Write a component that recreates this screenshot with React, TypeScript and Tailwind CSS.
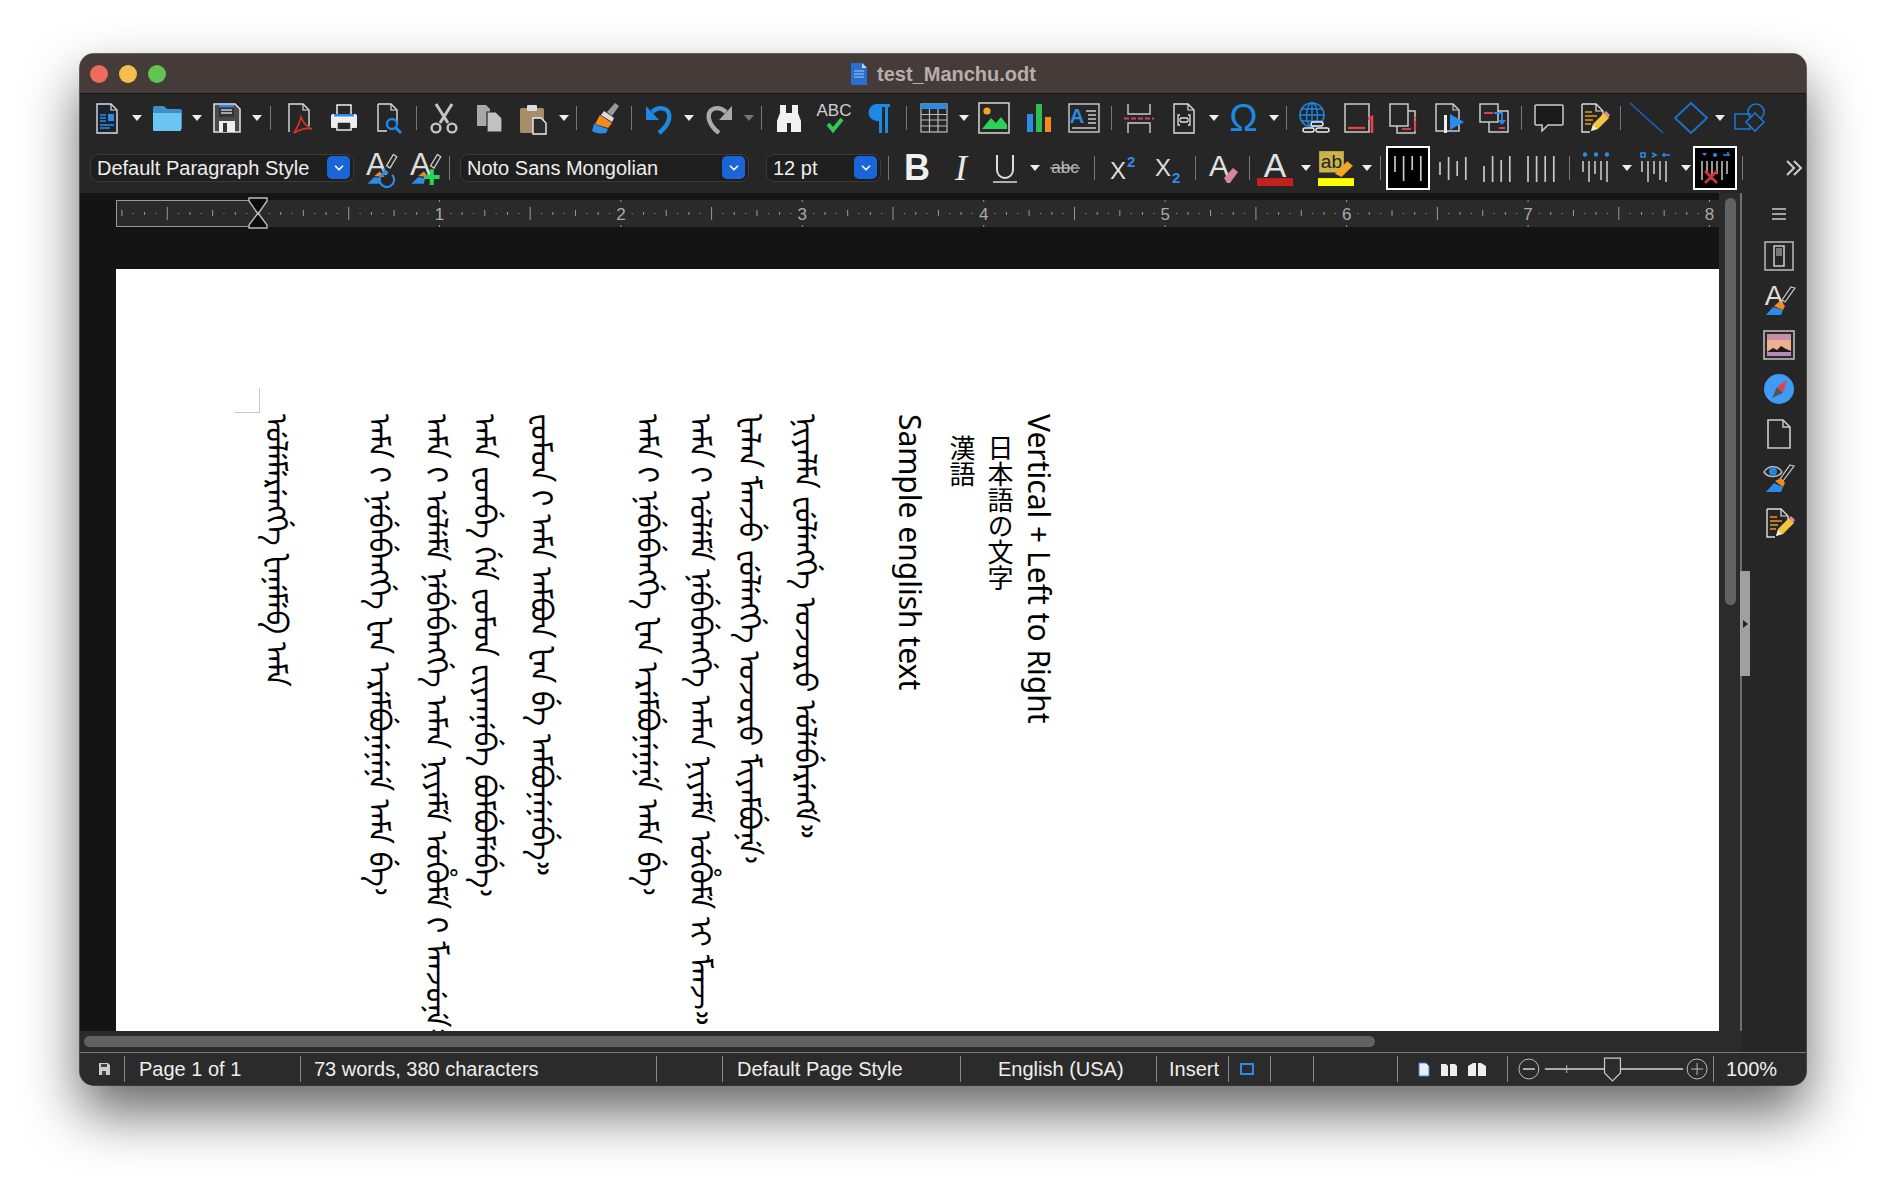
import type { ReactNode } from "react";
import { ChevronDown } from "lucide-react";

const sans = { fontFamily: '"Liberation Sans", sans-serif' };

function Ico({ children, size = 32 }: { children: ReactNode; size?: number }) {
  return (
    <svg width={size} height={size} viewBox="0 0 32 32" fill="none" className="overflow-visible">
      {children}
    </svg>
  );
}

const Page = ({ fill = "none", stroke = "#ddd" }: { fill?: string; stroke?: string }) => (
  <>
    <path d="M6 2h14l6 6v23H6z" fill={fill} stroke={stroke} strokeWidth="1.4" />
    <path d="M20 2v6h6" stroke={stroke} strokeWidth="1.2" />
  </>
);

const NewDoc = () => (
  <Ico>
    <Page fill="#1a2431" />
    <path d="M9 13h6M9 16h6M9 19h6M9 23h14M9 26h10" stroke="#2b8be6" strokeWidth="1.5" />
    <rect x="17" y="12" width="6" height="7" fill="#2b8be6" />
  </Ico>
);
const Folder = () => (
  <Ico>
    <path d="M2 6a2 2 0 0 1 2-2h9l3 3h13a2 2 0 0 1 2 2v18H2z" fill="#3f8fc9" />
    <path d="M2 11h28v17a1 1 0 0 1-1 1H3a1 1 0 0 1-1-1z" fill="#6cc4f2" />
  </Ico>
);
const Save = () => (
  <Ico>
    <path d="M3 2h21l5 5v23H3z" fill="#4a4a4a" stroke="#ddd" strokeWidth="1.6" />
    <rect x="8" y="3" width="15" height="12" fill="#333" />
    <rect x="8" y="3" width="15" height="2.4" fill="#2b8be6" />
    <path d="M10 8h11M10 11h11" stroke="#ccc" strokeWidth="1.4" />
    <rect x="8" y="19" width="16" height="11" fill="#eee" />
    <rect x="12" y="21" width="4" height="9" fill="#333" />
  </Ico>
);
const Pdf = () => (
  <Ico>
    <path d="M6 30V2h14l6 6v16" stroke="#ddd" strokeWidth="1.4" />
    <path d="M20 2v6h6" stroke="#ddd" strokeWidth="1.2" />
    <path d="M18 15c-1 5-4 11-7 16 5-3 12-6 18-4-4-1-9-6-11-12z" stroke="#d8322a" strokeWidth="1.6" />
  </Ico>
);
const Printer = () => (
  <Ico>
    <rect x="9" y="3" width="14" height="11" fill="#262626" stroke="#eee" strokeWidth="1.5" />
    <path d="M3 14a2 2 0 0 1 2-2h22a2 2 0 0 1 2 2v11a1 1 0 0 1-1 1H4a1 1 0 0 1-1-1z" fill="#eee" />
    <rect x="6" y="12" width="20" height="2.5" fill="#2b8be6" />
    <rect x="9" y="20" width="14" height="8" fill="#262626" stroke="#eee" strokeWidth="1.5" />
  </Ico>
);
const Preview = () => (
  <Ico>
    <path d="M5 2h13l6 6v14M14 29H5V2" stroke="#ddd" strokeWidth="1.4" />
    <path d="M18 2v6h6" stroke="#ddd" strokeWidth="1.2" />
    <circle cx="19" cy="22" r="5" stroke="#1e88e5" strokeWidth="2.4" />
    <path d="M23 26l5 5" stroke="#1e88e5" strokeWidth="3" />
  </Ico>
);
const Cut = () => (
  <Ico>
    <path d="M8 2l12 19M24 2L12 21" stroke="#c4c4c4" strokeWidth="3" />
    <circle cx="8" cy="26" r="4.4" stroke="#c4c4c4" strokeWidth="2.4" />
    <circle cx="24" cy="26" r="4.4" stroke="#c4c4c4" strokeWidth="2.4" />
  </Ico>
);
const Copy = () => (
  <Ico>
    <path d="M4 3h9l4 4v17H4z" fill="#a8a8a8" />
    <path d="M14 10h9l6 6v14H14z" fill="#c2c2c2" stroke="#262626" strokeWidth="1.2" />
  </Ico>
);
const Paste = () => (
  <Ico>
    <rect x="2" y="6" width="24" height="25" rx="1.5" fill="#a88d6b" />
    <rect x="9" y="3" width="10" height="6" rx="1" fill="#ddd" />
    <path d="M15 16h8l5 5v11H15z" fill="#2b2b2b" stroke="#eee" strokeWidth="1.4" />
  </Ico>
);
const Brush = () => (
  <Ico>
    <path d="M27 1l4 3-7 10-5-4z" fill="#9a9a9a" />
    <path d="M16 9l10 7-2 4-11-7z" fill="#ddd" />
    <path d="M12 13l12 8-4 5-13-4z" fill="#f58a1f" />
    <path d="M6 22l14 5-2 4c-6 1-12 0-14-2z" fill="#2b8be6" />
  </Ico>
);
const Undo = () => (
  <Ico>
    <path d="M3 4v14h13z" fill="#1e88e5" />
    <path d="M9 10c8-7 19-4 17 7-1 5-5 10-10 14" stroke="#1e88e5" strokeWidth="4.4" />
  </Ico>
);
const Redo = () => (
  <svg width="32" height="32" viewBox="0 0 32 32" fill="none" className="-scale-x-100">
    <path d="M3 4v14h13z" fill="#aaa" />
    <path d="M9 10c8-7 19-4 17 7-1 5-5 10-10 14" stroke="#aaa" strokeWidth="4.4" />
  </svg>
);
const Binoculars = () => (
  <Ico>
    <path d="M7 3h6v8h6V3h6v8l3 8v11H18v-9h-4v9H4V19l3-8z" fill="#f2f2f2" />
  </Ico>
);
const Spell = () => (
  <Ico>
    <text x="16" y="14" textAnchor="middle" fontSize="17" fill="#d0d0d0" style={sans}>
      ABC
    </text>
    <path d="M10 22l5 6 9-11" stroke="#2ecc50" strokeWidth="4" />
  </Ico>
);
const Para = () => (
  <Ico>
    <path d="M27 2H14a8 8 0 0 0 0 17h2v12h3V5h3v26h3V5h2z" fill="#1e88e5" />
  </Ico>
);
const Table = () => (
  <Ico>
    <rect x="3" y="2" width="26" height="28" stroke="#bbb" strokeWidth="1.2" />
    <rect x="3" y="2" width="26" height="5" fill="#2b8be6" />
    <path d="M3 12.5h26M3 18h26M3 24h26M11.5 7v23M20 7v23" stroke="#bbb" strokeWidth="1.2" />
  </Ico>
);
const Picture = () => (
  <Ico>
    <rect x="1" y="1" width="30" height="30" fill="#262626" stroke="#ccc" strokeWidth="1.6" />
    <circle cx="9" cy="9" r="3.6" fill="#f5a623" />
    <path d="M4 27l9-11 5 5 5-6 6 8v4H4z" fill="#2bd458" />
  </Ico>
);
const Chart = () => (
  <Ico>
    <rect x="4" y="12" width="6" height="18" fill="#2b8be6" />
    <rect x="13" y="2" width="6" height="28" fill="#2bbf4f" />
    <rect x="22" y="15" width="6" height="15" fill="#f58a1f" />
  </Ico>
);
const TextBox = () => (
  <Ico>
    <rect x="1" y="2" width="30" height="28" stroke="#ccc" strokeWidth="1.4" />
    <text x="9" y="21" textAnchor="middle" fontSize="20" fontWeight="700" fill="#2b8be6" style={sans}>
      A
    </text>
    <path d="M18 9h10M20 13h8M20 17h8M20 21h8M4 26h24" stroke="#ccc" strokeWidth="1.4" />
  </Ico>
);
const PageBreak = () => (
  <Ico>
    <path d="M5 2v10h22V2M5 31V21h22v10" stroke="#ccc" strokeWidth="1.4" />
    <path d="M1 16.5h30" stroke="#d0436a" strokeWidth="2" strokeDasharray="5 2" />
  </Ico>
);
const Field = () => (
  <Ico>
    <Page fill="#262626" />
    <path d="M12 13h-2v10h2M20 13h2v10h-2" stroke="#ddd" strokeWidth="1.3" />
    <rect x="12" y="16" width="8" height="4" rx="1" stroke="#ddd" strokeWidth="1.3" />
  </Ico>
);
const Globe = () => (
  <Ico>
    <circle cx="14" cy="13" r="12" stroke="#1e88e5" strokeWidth="1.6" />
    <ellipse cx="14" cy="13" rx="5.5" ry="12" stroke="#1e88e5" strokeWidth="1.4" />
    <path d="M2 13h24M4 7h20M4 19h20M14 1v24" stroke="#1e88e5" strokeWidth="1.4" />
    <rect x="13" y="20" width="12" height="4" rx="2" fill="#262626" stroke="#eee" strokeWidth="1.4" />
    <rect x="18" y="26" width="13" height="4" rx="2" fill="#262626" stroke="#eee" strokeWidth="1.4" />
    <rect x="5" y="26" width="11" height="4" rx="2" fill="#262626" stroke="#eee" strokeWidth="1.4" />
  </Ico>
);
const Footnote = () => (
  <Ico>
    <rect x="2" y="2" width="24" height="28" stroke="#ccc" strokeWidth="1.5" />
    <path d="M5 26h17" stroke="#e8404a" strokeWidth="2.4" />
    <path d="M25 17l4-2v16" stroke="#e8404a" strokeWidth="2.6" />
  </Ico>
);
const Endnote = () => (
  <Ico>
    <rect x="2" y="2" width="18" height="22" stroke="#ccc" strokeWidth="1.5" />
    <path d="M20 9h7v22H9v-7" stroke="#ccc" strokeWidth="1.5" />
    <path d="M14 27h9" stroke="#e8404a" strokeWidth="1.8" />
    <path d="M27 15v1.8M27 18.5V29" stroke="#e8404a" strokeWidth="2.2" />
  </Ico>
);
const Bookmark = () => (
  <Ico>
    <path d="M3 2h17l6 6v21H3z" stroke="#ccc" strokeWidth="1.5" />
    <path d="M20 2v6h6" stroke="#ccc" strokeWidth="1.2" />
    <rect x="11" y="13" width="3" height="18" fill="#eee" />
    <path d="M17 12l14 8-14 8z" fill="#2b8be6" />
  </Ico>
);
const CrossRef = () => (
  <Ico>
    <rect x="2" y="2" width="18" height="18" stroke="#ccc" strokeWidth="1.5" />
    <path d="M20 9h10v21H11V20" stroke="#ccc" strokeWidth="1.5" />
    <path d="M6 11h9M21 26h6" stroke="#e8404a" strokeWidth="1.8" />
    <path d="M16 11h8v8" stroke="#2b8be6" strokeWidth="1.8" />
    <path d="M20 18h8l-4 5z" fill="#2b8be6" />
  </Ico>
);
const Comment = () => (
  <Ico>
    <path d="M3 3h26a1 1 0 0 1 1 1v18a1 1 0 0 1-1 1H15l-6 6v-6H3a1 1 0 0 1-1-1V4a1 1 0 0 1 1-1z" fill="#1a1a1a" stroke="#ccc" strokeWidth="1.5" />
  </Ico>
);
const Pencil = () => (
  <>
    <path d="M13 29l2-7 11-11 5 5-11 11z" fill="#f5c242" />
    <path d="M26 11l2-2 4 4-2 3z" fill="#e08a9a" />
    <path d="M13 29l2-6 4 4z" fill="#eee" />
  </>
);
const Track = () => (
  <Ico>
    <path d="M4 2h14l7 7v8M12 30H4V2" stroke="#ddd" strokeWidth="1.4" fill="#262626" />
    <path d="M18 2v7h7" stroke="#ddd" strokeWidth="1.2" />
    <path d="M7 10h7M7 14h12M7 18h8M7 22h6" stroke="#e89a1c" strokeWidth="1.6" />
    <Pencil />
  </Ico>
);
const Line = () => (
  <Ico>
    <path d="M-1 1l33 30" stroke="#1565c0" strokeWidth="1.6" />
  </Ico>
);
const Diamond = () => (
  <Ico>
    <path d="M16 1l16 15-16 15L0 16z" stroke="#1976d2" strokeWidth="1.8" />
  </Ico>
);
const Shapes = () => (
  <Ico>
    <rect x="1" y="12" width="15" height="15" stroke="#1976d2" strokeWidth="1.6" />
    <circle cx="22" cy="10" r="8" stroke="#1976d2" strokeWidth="1.6" />
    <path d="M21 11l9 9-9 9-9-9z" fill="#262626" stroke="#1976d2" strokeWidth="1.6" />
  </Ico>
);

const StyleUpdate = () => (
  <Ico size={36}>
    <text x="12" y="22" textAnchor="middle" fontSize="28" fill="#ddd" style={sans}>
      A
    </text>
    <path d="M27 4l3 2-6 10-3-2z" stroke="#ccc" strokeWidth="1.2" />
    <path d="M10 23l5-4 4 5z" fill="#f58a1f" />
    <path d="M4 30l6-6 6 1-1 5z" fill="#2b8be6" />
    <path d="M26 22a6.5 6.5 0 1 1-6-2" stroke="#2b8be6" strokeWidth="2" />
    <path d="M18 16v7l5-3z" fill="#2b8be6" />
  </Ico>
);
const StyleNew = () => (
  <Ico size={36}>
    <text x="12" y="22" textAnchor="middle" fontSize="28" fill="#ddd" style={sans}>
      A
    </text>
    <path d="M27 4l3 2-6 10-3-2z" stroke="#ccc" strokeWidth="1.2" />
    <path d="M10 23l5-4 4 5z" fill="#f58a1f" />
    <path d="M4 30l6-6 6 1-1 5z" fill="#2b8be6" />
    <path d="M22 17v14M15 24h14" stroke="#2bd458" strokeWidth="3.6" />
  </Ico>
);
const Bold = () => (
  <span className="text-[36px] font-bold leading-none text-[#f0f0f0]" style={sans}>
    B
  </span>
);
const Italic = () => (
  <span className="text-[36px] italic leading-none text-[#e8e8e8]" style={{ fontFamily: '"Liberation Serif", serif' }}>
    I
  </span>
);
const Under = () => (
  <Ico>
    <path d="M8 3v15a8 8 0 0 0 16 0V3" stroke="#ddd" strokeWidth="2" />
    <path d="M4 30h24" stroke="#ddd" strokeWidth="1.5" />
  </Ico>
);
const Strike = () => (
  <Ico>
    <text x="16" y="21" textAnchor="middle" fontSize="17" fill="#bbb" style={sans}>
      abc
    </text>
    <path d="M1 16h30" stroke="#bbb" strokeWidth="1.3" />
  </Ico>
);
const Sup = () => (
  <Ico>
    <text x="3" y="27" fontSize="24" fill="#ddd" style={sans}>
      X
    </text>
    <text x="20" y="15" fontSize="15" fontWeight="700" fill="#2b8be6" style={sans}>
      2
    </text>
  </Ico>
);
const Sub = () => (
  <Ico>
    <text x="3" y="24" fontSize="24" fill="#ddd" style={sans}>
      X
    </text>
    <text x="20" y="31" fontSize="15" fontWeight="700" fill="#2b8be6" style={sans}>
      2
    </text>
  </Ico>
);
const ClearFmt = () => (
  <Ico>
    <text x="12" y="24" textAnchor="middle" fontSize="30" fill="#e0e0e0" style={sans}>
      A
    </text>
    <path d="M17 26l9-10 5 4-8 11h-3z" fill="#d8859a" />
  </Ico>
);
const FontColor = () => (
  <Ico size={36}>
    <text x="16" y="24" textAnchor="middle" fontSize="30" fill="#e0e0e0" style={sans}>
      A
    </text>
    <rect x="0" y="25" width="32" height="7" fill="#c42020" />
  </Ico>
);
const Highlight = () => (
  <Ico size={36}>
    <rect x="1" y="1" width="22" height="19" fill="#c9b34a" />
    <text x="12" y="16" textAnchor="middle" fontSize="17" fill="#222" style={sans}>
      ab
    </text>
    <path d="M15 21l11-11 5 4-10 10z" fill="#f5a623" />
    <rect x="0" y="25" width="32" height="7" fill="#ffff00" />
  </Ico>
);
const Strands = ({ ends }: { ends: [number, number][] }) => (
  <Ico>
    {ends.map(([a, b], i) => (
      <path key={i} d={`M${3 + i * 8.6} ${a}V${b}`} stroke="#c8c8c8" strokeWidth="1.7" />
    ))}
  </Ico>
);
const Marks = ({ kind }: { kind: "dots" | "nums" }) => (
  <Ico>
    {kind === "dots" && [4, 15, 26].map((x) => <circle key={x} cx={x} cy="2.5" r="2.2" fill="#2b8be6" />)}
    {kind === "nums" && <path d="M1 1h4v4H1zM12 1l4 2-4 2M24 1v4M22 3h8" stroke="#2b8be6" strokeWidth="1.6" />}
    {[
      [2, 9, 20],
      [8, 9, 30],
      [14, 9, 22],
      [20, 9, 28],
      [26, 9, 30],
    ].map(([x, a, b]) => (
      <path key={x} d={`M${x} ${a}V${b}`} stroke="#c8c8c8" strokeWidth="1.6" />
    ))}
  </Ico>
);
const MarkOff = () => (
  <Ico>
    <path d="M3 1h5l-2.5 3z" fill="#2b8be6" />
    <circle cx="16" cy="3" r="2" fill="#2b8be6" />
    <path d="M24 3h7M29 0v3" stroke="#2b8be6" strokeWidth="1.6" />
    {[3, 8, 13, 18, 23, 28].map((x, i) => (
      <path key={x} d={`M${x} 9V${i % 2 ? 22 : 28}`} stroke="#c8c8c8" strokeWidth="1.5" />
    ))}
    <path d="M6 19l12 12M18 19L6 31" stroke="#d8323a" strokeWidth="2.6" />
  </Ico>
);

const Props = () => (
  <Ico>
    <rect x="2" y="2" width="28" height="28" stroke="#bbb" strokeWidth="1.5" />
    <rect x="11" y="6" width="10" height="20" stroke="#ccc" strokeWidth="1.5" />
    <rect x="13" y="8" width="6" height="8" fill="#777" />
    <path d="M4.5 5v.1M27.5 5v.1M4.5 27v.1M27.5 27v.1" stroke="#ccc" strokeWidth="2" />
  </Ico>
);
const SideStyle = () => (
  <Ico>
    <text x="11" y="21" textAnchor="middle" fontSize="28" fill="#ddd" style={sans}>
      A
    </text>
    <path d="M28 3l4 1-10 14-3-2z" stroke="#ccc" strokeWidth="1.2" />
    <path d="M11 22l6-5 5 5-2 4z" fill="#f58a1f" />
    <path d="M3 31l7-8 10 3-2 5z" fill="#2b8be6" />
  </Ico>
);
const Gallery = () => (
  <Ico>
    <rect x="1" y="2" width="30" height="28" fill="#2b2b2b" stroke="#bbb" strokeWidth="1.6" />
    <rect x="4" y="5" width="24" height="22" fill="#f0b090" />
    <rect x="4" y="5" width="24" height="6" fill="#c490a8" />
    <path d="M4 23l6-4 4 2 4-4 5 3 5 2v2H4z" fill="#1a1a1a" />
    <rect x="4" y="23" width="24" height="4" fill="#b58ab8" />
  </Ico>
);
const Compass = () => (
  <Ico>
    <circle cx="16" cy="16" r="15" fill="#3f9bf5" />
    <path d="M24 7l-4 13-6-6z" fill="#e8404a" />
    <path d="M9 25l5-11 6 6z" fill="#555" />
  </Ico>
);
const BlankPage = () => (
  <Ico>
    <path d="M5 2h15l7 7v21H5z" stroke="#ccc" strokeWidth="1.6" />
    <path d="M20 2v7h7" stroke="#ccc" strokeWidth="1.4" />
  </Ico>
);
const Inspector = () => (
  <Ico>
    <path d="M1 10c4-7 14-7 18 0-4 6-14 6-18 0z" stroke="#bbb" strokeWidth="1.5" />
    <circle cx="10" cy="9.5" r="4" fill="#1e88e5" />
    <path d="M27 3l4 1-11 15-3-2z" stroke="#ccc" strokeWidth="1.2" />
    <path d="M12 19l6-3 4 5-2 4z" fill="#f58a1f" />
    <path d="M3 30l8-9 9 4-2 5z" fill="#2b8be6" />
  </Ico>
);

function T({ children, w = "w-[45px]" }: { children: ReactNode; w?: string }) {
  return <div className={`flex h-[44px] shrink-0 items-center justify-center ${w}`}>{children}</div>;
}
function Arrow({ dim }: { dim?: boolean }) {
  return (
    <div className="flex h-[44px] w-[15px] shrink-0 items-center justify-center">
      <span className={`h-0 w-0 border-x-[5px] border-t-[6px] border-x-transparent ${dim ? "border-t-[#777]" : "border-t-[#eee]"}`} />
    </div>
  );
}
function Sep({ w = "w-[10px]" }: { w?: string }) {
  return (
    <div className={`flex h-[44px] shrink-0 items-center justify-center ${w}`}>
      <span className="h-[24px] w-px bg-[#777]" />
    </div>
  );
}
function Combo({ label, w }: { label: string; w: string }) {
  return (
    <div className={`flex h-[28px] shrink-0 items-center justify-between rounded-lg border border-[#3a3a3a] bg-[#1f1f1f] pl-[6px] pr-[3px] text-[20px] text-[#eee] ${w}`} style={sans}>
      <span>{label}</span>
      <span className="flex h-[23px] w-[23px] items-center justify-center rounded-[5px] bg-[#1a66d9]">
        <ChevronDown size={14} strokeWidth={3} color="#fff" />
      </span>
    </div>
  );
}
function Selected({ children }: { children: ReactNode }) {
  return <div className="flex h-[44px] w-[44px] shrink-0 items-center justify-center border-2 border-white bg-black">{children}</div>;
}

function TopBar() {
  return (
    <div className="flex h-[40px] shrink-0 items-center justify-center rounded-t-[14px] border-b border-[#141414] bg-[#453b38]">
      <div className="absolute left-[10px] flex gap-[11px]">
        <span className="h-[18px] w-[18px] rounded-full bg-[#ec6a5e]" />
        <span className="h-[18px] w-[18px] rounded-full bg-[#f4bf4f]" />
        <span className="h-[18px] w-[18px] rounded-full bg-[#61c554]" />
      </div>
      <svg width="18" height="22" viewBox="0 0 18 22" className="mr-[9px]">
        <path d="M1 0h11l5 5v17H1z" fill="#2a6fd0" />
        <path d="M12 0v5h5z" fill="#bcd6f5" />
        <path d="M4 8h10M4 11h10M4 14h10" stroke="#a8ccf2" strokeWidth="1" />
      </svg>
      <span className="text-[20px] font-bold text-[#b8aeaa]" style={sans}>
        test_Manchu.odt
      </span>
    </div>
  );
}

function StandardBar() {
  return (
    <div className="flex h-[48px] items-center pl-[4px]">
      <T><NewDoc /></T><Arrow />
      <T><Folder /></T><Arrow />
      <T><Save /></T><Arrow />
      <Sep w="w-[12px]" />
      <T><Pdf /></T>
      <T><Printer /></T>
      <T><Preview /></T>
      <Sep />
      <T><Cut /></T>
      <T><Copy /></T>
      <T><Paste /></T><Arrow />
      <Sep />
      <T><Brush /></T>
      <Sep />
      <T><Undo /></T><Arrow />
      <T><Redo /></T><Arrow dim />
      <Sep />
      <T><Binoculars /></T>
      <T><Spell /></T>
      <T><Para /></T>
      <Sep />
      <T><Table /></T><Arrow />
      <T><Picture /></T>
      <T><Chart /></T>
      <T><TextBox /></T>
      <Sep />
      <T><PageBreak /></T>
      <T><Field /></T><Arrow />
      <T><span className="text-[38px] leading-none text-[#1e88e5]" style={sans}>Ω</span></T><Arrow />
      <Sep />
      <T><Globe /></T>
      <T><Footnote /></T>
      <T><Endnote /></T>
      <T><Bookmark /></T>
      <T><CrossRef /></T>
      <Sep />
      <T><Comment /></T>
      <T><Track /></T>
      <Sep w="w-[8px]" />
      <T><Line /></T>
      <T w="w-[43px]"><Diamond /></T><Arrow />
      <T><Shapes /></T>
    </div>
  );
}

function FormatBar() {
  return (
    <div className="flex h-[51px] items-center pl-[10px]">
      <Combo label="Default Paragraph Style" w="w-[264px]" />
      <T w="w-[47px] ml-[3px]"><StyleUpdate /></T>
      <T w="w-[41px]"><StyleNew /></T>
      <Sep w="w-[8px]" />
      <Combo label="Noto Sans Mongolian" w="w-[289px] ml-[7px]" />
      <Combo label="12 pt" w="w-[115px] ml-[17px]" />
      <Sep w="w-[14px]" />
      <T w="w-[44px]"><Bold /></T>
      <T w="w-[44px]"><Italic /></T>
      <T w="w-[44px]"><Under /></T><Arrow />
      <T w="w-[46px]"><Strike /></T>
      <Sep w="w-[12px]" />
      <T w="w-[45px]"><Sup /></T>
      <T w="w-[45px]"><Sub /></T>
      <Sep w="w-[10px]" />
      <T w="w-[46px]"><ClearFmt /></T>
      <Sep w="w-[6px]" />
      <T w="w-[46px]"><FontColor /></T><Arrow />
      <T w="w-[46px]"><Highlight /></T><Arrow />
      <Sep w="w-[12px]" />
      <Selected>
        <Strands ends={[[4, 20], [4, 29], [4, 18], [4, 29]]} />
      </Selected>
      <T w="w-[45px]"><Strands ends={[[10, 23], [5, 28], [9, 24], [5, 28]]} /></T>
      <T w="w-[44px]"><Strands ends={[[14, 30], [4, 30], [8, 30], [4, 30]]} /></T>
      <T w="w-[44px]"><Strands ends={[[4, 30], [4, 30], [4, 30], [4, 30]]} /></T>
      <Sep w="w-[12px]" />
      <T w="w-[44px]"><Marks kind="dots" /></T><Arrow />
      <T w="w-[44px]"><Marks kind="nums" /></T><Arrow />
      <Selected><MarkOff /></Selected>
      <Sep w="w-[10px]" />
      <div className="ml-auto mr-[3px]">
        <svg width="18" height="16" viewBox="0 0 18 16" fill="none">
          <path d="M2 1l7 7-7 7M9 1l7 7-7 7" stroke="#ccc" strokeWidth="2" />
        </svg>
      </div>
    </div>
  );
}

function Ruler() {
  const ticks = Array.from({ length: 141 }, (_, i) => i - 12);
  return (
    <svg width="1603" height="27" viewBox="0 0 1603 27" className="block overflow-visible" fill="none" style={sans}>
      <rect width="1603" height="27" fill="#2a2a2a" />
      <rect x="0.5" y="0.5" width="142" height="26" stroke="#9a9a9a" />
      {ticks.map((i) => {
        const x = 142 + i * 11.34;
        if (i % 16 === 0) {
          if (i === 0) return null;
          return (
            <g key={i}>
              <path d={`M${x} 0v2M${x} 25v2`} stroke="#999" />
              <text x={x} y="20" textAnchor="middle" fontSize="17" fill="#aaa">
                {i / 16}
              </text>
            </g>
          );
        }
        if (i % 8 === 0) return <path key={i} d={`M${x} 7v13`} stroke="#999" />;
        if (i % 4 === 0) return <path key={i} d={`M${x} 10v6`} stroke="#999" />;
        if (i % 2 === 0) return <path key={i} d={`M${x} 12v3`} stroke="#999" />;
        return <path key={i} d={`M${x} 13v1`} stroke="#999" />;
      })}
      <path d="M133 -2h18v3l-9 13-9-13zM133 28h18v-3l-9-12-9 12z" fill="#0c0c0c" stroke="#bbb" strokeWidth="1.4" />
    </svg>
  );
}

const MANCHU_FONT = { fontFamily: '"Noto Sans Mongolian", "Noto Sans", sans-serif' };
const LINES = [
  { t: "Vertical + Left to Right", c: "ml-[3px] text-[30px]" },
  { t: "日本語の文字", c: "ml-[2px] pt-[21px] text-[26px]", cjk: true },
  { t: "漢語", c: "ml-[16px] pt-[21px] text-[26px]", cjk: true },
  { t: "Sample english text", c: "ml-[62px] text-[30px]" },
  { t: "ᠨᡳᠶᠠᠯᠮᠠ ᡶᡠᠯᡝᠩᡤᡝ ᠣᠵᠣᡵᠣ ᡠᠯᡝᠪᡝᡵᡝᠩᡝ᠉", c: "ml-[20px] text-[30px]", m: true },
  { t: "ᡶᠠᠯᠠᠨ ᠮᠠᠨᠵᡠ ᡶᡠᠯᡝᠩᡤᡝ ᠣᠵᠣᡵᠣ ᠮᡳᠶᠠᠮᠪᡠᠨᡝ᠈", c: "ml-[13px] text-[30px]", m: true },
  { t: "ᠠᠮᠠ ᡳ᠋ ᡠᠯᡝᠮᡝ ᠨᡝᠪᡝᠪᡝᠩᡤᡝ ᠠᠮᠠᠨ ᠨᡳᠶᡝᠮᡝ ᡠᡥᡠᠮᡝ ᡳ ᠮᠠᠨᠵ᠉", c: "ml-[17px] text-[30px]", m: true },
  { t: "ᠠᠮᠠ ᡳ᠋ ᠨᡝᠪᡝᠪᡝᠩᡤᡝ ᡶᠠᠨ ᡝᡵᡝᠮᠪᡠᠨᡝᠨᡝᠨᡝ ᠠᠮᠠ ᠪᡝ᠈", c: "ml-[70px] text-[30px]", m: true },
  { t: "ᡶᠣᠮᠣᠨ ᡳ᠋ ᠠᠮᠠ ᠠᠮᠪᠣᠨ ᡶᠠᠨ ᠪᡝ ᠠᠮᠪᡠᠨᡝᠨᡝᠪᡝ᠉", c: "ml-[21px] text-[30px]", m: true },
  { t: "ᠠᠮᠠ ᡶᠣᠨᠪᡝ ᡤᡝᡝ ᡶᠣᠮᠣᠨ ᡶᡳᠶᠠᠨᠨᡝᠪᡝ ᠪᡠᠮᠪᡠᠮᡝᠪᡝ᠈", c: "ml-[12px] text-[30px]", m: true },
  { t: "ᠠᠮᠠ ᡳ᠋ ᡠᠯᡝᠮᡝ ᠨᡝᠪᡝᠪᡝᠩᡤᡝ ᠠᠮᠠᠨ ᠨᡳᠶᡝᠮᡝ ᡠᡥᡠᠮᡝ ᡳ᠋ ᠮᠠᠨᠵᡠᠨᡝ᠉", c: "ml-[21px] text-[30px]", m: true },
  { t: "ᠠᠮᠠ ᡳ᠋ ᠨᡝᠪᡝᠪᡝᠩᡤᡝ ᡶᠠᠨ ᡝᡵᡝᠮᠪᡠᠨᡝᠨᡝᠨᡝ ᠠᠮᠠ ᠪᡝ᠈", c: "ml-[67px] text-[30px]", m: true },
  { t: "ᡠᠯᡝᠮᡝᡵᡝᠩᡤᡝ ᡶᠠᠨᡝᠮᡝᠪ ᠠᠮᠠ", c: "text-[30px]", m: true },
];

function Document() {
  return (
    <div className="relative mt-[42px] flex-1 overflow-hidden bg-white pr-[662px] pt-[145px] text-black [writing-mode:vertical-rl]">
      <span className="absolute right-[1459px] top-[119px] h-[25px] w-[26px] border-b border-r border-[#c8c8c8]" />
      {LINES.map((l) => (
        <p
          key={l.t + l.c}
          className={`whitespace-nowrap leading-[36px] ${l.c}`}
          style={l.cjk ? { fontFamily: '"Noto Sans CJK JP", sans-serif' } : l.m ? MANCHU_FONT : { fontFamily: '"Noto Sans", sans-serif' }}
        >
          {l.t}
        </p>
      ))}
    </div>
  );
}

function StatusCell({ w, children, className = "" }: { w: string; children?: ReactNode; className?: string }) {
  return (
    <div className={`flex h-[26px] shrink-0 items-center border-r border-[#8a8a8a] whitespace-nowrap ${w} ${className}`}>{children}</div>
  );
}

function StatusBar() {
  return (
    <div className="flex h-[32px] shrink-0 items-center rounded-b-[14px] bg-[#2b2b2b] text-[20px] text-[#eee]" style={sans}>
      <StatusCell w="w-[45px]" className="justify-center pl-[4px]">
        <svg width="13" height="14" viewBox="0 0 13 14">
          <path d="M1 1h9l2 2v10H1z" fill="#ccc" />
          <rect x="3" y="2" width="6" height="3" fill="#444" />
          <rect x="4" y="9" width="4" height="4" fill="#444" />
        </svg>
      </StatusCell>
      <StatusCell w="w-[176px] pl-[14px]">Page 1 of 1</StatusCell>
      <StatusCell w="w-[356px] pl-[13px]">73 words, 380 characters</StatusCell>
      <StatusCell w="w-[66px]" />
      <StatusCell w="w-[238px] pl-[14px]">Default Page Style</StatusCell>
      <StatusCell w="w-[196px] pl-[37px]">English (USA)</StatusCell>
      <StatusCell w="w-[72px] pl-[12px]">Insert</StatusCell>
      <StatusCell w="w-[42px] pl-[11px]">
        <span className="h-[12px] w-[14px] border-2 border-[#2b8be6]" />
      </StatusCell>
      <StatusCell w="w-[43px]" />
      <StatusCell w="w-[84px]" />
      <StatusCell w="w-[110px] gap-[9px] pl-[19px]">
        <svg width="14" height="15" viewBox="0 0 14 15"><path d="M2 1h7l3 3v10H2z" fill="#eee" stroke="#2b8be6" /></svg>
        <svg width="18" height="15" viewBox="0 0 18 15"><path d="M1 2h5l2 2v10H1zM10 2h5l2 2v10h-7z" fill="#eee" /></svg>
        <svg width="20" height="15" viewBox="0 0 20 15"><path d="M1 4l5-3h3v13H1zM11 1h3l5 3v10h-8z" fill="#eee" /></svg>
      </StatusCell>
      <StatusCell w="w-[206px]" className="relative">
        <svg width="206" height="26" viewBox="0 0 206 26" fill="none">
          <circle cx="21" cy="13" r="10" stroke="#bbb" />
          <path d="M15 13h12M37 13h139" stroke="#aaa" strokeWidth="2" />
          <path d="M59 9v8" stroke="#bbb" />
          <path d="M97 2h16v15l-8 8-8-8z" fill="#2b2b2b" stroke="#ccc" strokeWidth="1.2" />
          <circle cx="190" cy="13" r="10" stroke="#bbb" />
          <path d="M184 13h12M190 7v12" stroke="#bbb" />
        </svg>
      </StatusCell>
      <div className="pl-[12px]">100%</div>
    </div>
  );
}

export default function App() {
  return (
    <div className="h-[1190px] w-[1886px] overflow-hidden bg-white pl-[80px] pt-[54px]">
      <div className="relative flex h-[1031px] w-[1726px] flex-col rounded-[14px] bg-[#262626] shadow-[0_28px_55px_rgba(0,0,0,0.6),0_0_0_1px_#6a6a6a]">
        <TopBar />
        <div className="h-[99px] shrink-0">
          <StandardBar />
          <FormatBar />
        </div>
        <div className="flex min-h-0 flex-1">
          <div className="flex min-w-0 flex-1 flex-col">
            <div className="flex min-h-0 flex-1">
              <div className="flex min-w-0 flex-1 flex-col bg-[#141414] pl-[36px]">
                <div className="mt-[7px] shrink-0">
                  <Ruler />
                </div>
                <Document />
              </div>
              <div className="relative w-[23px] shrink-0 border-r-2 border-[#6e6e6e] bg-[#2b2b2b] pl-[6px] pt-[5px]">
                <div className="h-[407px] w-[11px] rounded-full bg-[#626262]" />
                <div className="absolute left-[21px] top-[378px] flex h-[105px] w-[10px] items-center justify-center bg-[#a0a0a0]">
                  <span className="h-0 w-0 border-y-[4px] border-l-[5px] border-y-transparent border-l-[#222]" />
                </div>
              </div>
            </div>
            <div className="h-[22px] shrink-0 border-b border-[#777] bg-[#2b2b2b] pl-[4px] pt-[5px]">
              <div className="h-[11px] w-[1291px] rounded-full bg-[#626262]" />
            </div>
          </div>
          <div className="flex w-[64px] shrink-0 flex-col items-center gap-[12.5px] border-b border-[#777] pl-[10px] pt-[15px]">
            <svg width="16" height="12" viewBox="0 0 16 12" fill="none" className="mb-[7px]">
              <path d="M1 1h14M1 6h14M1 11h14" stroke="#ccc" strokeWidth="1.6" />
            </svg>
            <Props />
            <SideStyle />
            <Gallery />
            <Compass />
            <BlankPage />
            <Inspector />
            <Track />
          </div>
        </div>
        <StatusBar />
      </div>
    </div>
  );
}
